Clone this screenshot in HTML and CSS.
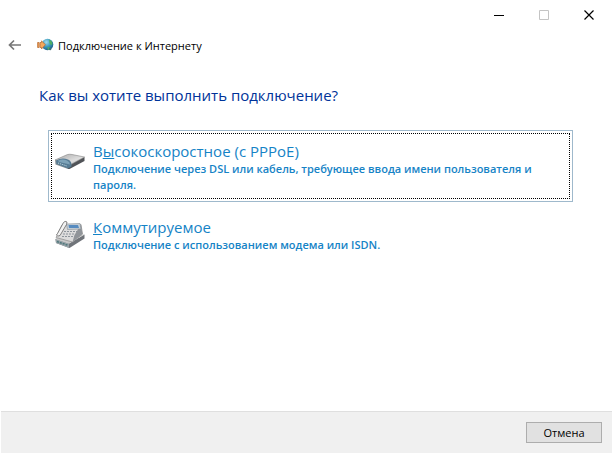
FILE: index.html
```html
<!DOCTYPE html>
<html lang="ru">
<head>
    <meta charset="utf-8">
    <title>Подключение к Интернету</title>
    <link rel="stylesheet" href="styles.css">
</head>
<body>
    <div class="window">
        <div class="window-controls">
            <button type="button" class="control" aria-label="Свернуть">
                <svg width="11" height="11" viewBox="0 0 11 11"><path d="M0 5.5h10" stroke="#000"/></svg>
            </button>
            <button type="button" class="control" aria-label="Развернуть" disabled>
                <svg width="11" height="11" viewBox="0 0 11 11"><path d="M.5 .5h9v9h-9z" fill="none" stroke="#c4c4c4"/></svg>
            </button>
            <button type="button" class="control" aria-label="Закрыть">
                <svg width="11" height="11" viewBox="0 0 11 11"><path d="M.5 .5l9 9M9.500 .5l-9 9" stroke="#000" stroke-width="1.2"/></svg>
            </button>
        </div>

        <header class="header">
            <button type="button" class="back" aria-label="Назад">
                <svg width="14" height="12" viewBox="0 0 14 12"><path d="M1.500 6H13M6 1.500L1.500 6L6 10.500" fill="none" stroke="#777" stroke-width="1.7"/></svg>
            </button>
            <svg class="app-icon" width="17" height="14" viewBox="0 0 17 14">
                <defs>
                    <radialGradient id="globe" cx=".4" cy=".3" r=".75">
                        <stop offset="0" stop-color="#a5dcec"/>
                        <stop offset=".5" stop-color="#3c9cc0"/>
                        <stop offset="1" stop-color="#17557e"/>
                    </radialGradient>
                </defs>
                <circle cx="10.5" cy="6.5" r="5.8" fill="url(#globe)"/>
                <path d="M12 1.500l2.500 1.600 1 3-1.500 1.200-1.500-2zM10.500 9l2.500 .5-.6 2-1.600 .4z" fill="#4fae62"/>
                <path d="M.6 4.500h1.500v5H.6zM3 4.500h1.500V2.800l3.900 4L4.500 11V9.500H3z" fill="#f5a95c" stroke="#b4652c" stroke-width=".7"/>
                <circle cx="13.2" cy="11" r="1.2" fill="#3c6d78"/>
            </svg>
            <span class="header-title">Подключение к Интернету</span>
        </header>

        <main class="content">
            <h1>Как вы хотите выполнить подключение?</h1>

            <div class="options">
                <button type="button" class="option selected">
                    <svg class="option-icon" width="32" height="32" viewBox="0 0 32 32">
                        <defs>
                            <linearGradient id="modem-top" x1="0" y1="0" x2="1" y2="1">
                                <stop offset="0" stop-color="#a8a8a8"/>
                                <stop offset=".6" stop-color="#dedede"/>
                                <stop offset="1" stop-color="#a0a0a0"/>
                            </linearGradient>
                        </defs>
                        <path d="M1 16l13 4.500V25L1.500 20.500z" fill="#8f9497"/>
                        <path d="M14 20.500L30.500 13v4L15.500 25H14z" fill="#505357"/>
                        <path d="M1 16L13.500 10.500Q16 10 18 10.500L30.500 13 16 21Q14 21.500 12 20.500z" fill="url(#modem-top)" stroke="#858585" stroke-width=".6"/>
                        <path d="M2 16.500Q8 13 14 15.500Q18 17 17.500 22.500L14 24.500 2.500 20z" fill="#577c94"/>
                        <path d="M4 16.500Q9 14.500 13 16.500Q16 18 16 20.500L5 18z" fill="#7ea3b8"/>
                        <path d="M4 19l9 3" stroke="#c6dfe8" stroke-dasharray="1 1"/>
                    </svg>
                    <span class="option-text">
                        <span class="option-title">В<u>ы</u>сокоскоростное (с PPPoE)</span>
                        <span class="option-description">Подключение через DSL или кабель, требующее ввода имени пользователя и пароля.</span>
                    </span>
                </button>

                <button type="button" class="option">
                    <svg class="option-icon" width="32" height="32" viewBox="0 0 32 32">
                        <!-- base -->
                        <path d="M1.500 19L15 23.500 30.500 14.500V18.500L15.500 28 2 23z" fill="#70747a"/>
                        <path d="M1.500 19l13.500 4.500V28L2 23z" fill="#98a3a8"/>
                        <path d="M3 21.500l11 3.800" stroke="#4f797d" stroke-width="1.600" stroke-dasharray="2 1"/>
                        <path d="M1.500 19L7 14l23.500 .5L15 23.500z" fill="#c9c9c9"/>
                        <!-- phone body -->
                        <path d="M2 17.500L8 5 27 4.500 28.500 14 18.500 22z" fill="#dcdcdc" stroke="#8c8c8c" stroke-width=".7"/>
                        <path d="M27 4.500L28.500 14 18.500 22 20.500 15z" fill="#909499"/>
                        <path d="M12.500 4L26 3.500 27 9 13.500 9.500z" fill="#c6d0d8" stroke="#858b91" stroke-width=".6"/>
                        <path d="M14.500 5h9.500l1 3H15z" fill="#568bc0"/>
                        <path d="M10 11.500h13M9 14h12M8 16.500h11" stroke="#8d949b" stroke-width="1.200" stroke-dasharray="2 1"/>
                        <!-- handset -->
                        <path d="M3.500 13.500L9.500 2.500Q11 .5 13 2L12.500 4.500 6 15.500Q3.500 17 2.500 15z" fill="#f2f2f2" stroke="#666" stroke-width=".8"/>
                    </svg>
                    <span class="option-text">
                        <span class="option-title"><u>К</u>оммутируемое</span>
                        <span class="option-description">Подключение с использованием модема или ISDN.</span>
                    </span>
                </button>
            </div>
        </main>

        <footer class="footer">
            <button type="button" class="cancel">Отмена</button>
        </footer>
    </div>
</body>
</html>
```
FILE: styles.css
```css
* {
    box-sizing: border-box;
}

body {
    margin: 0;
    font-family: "Open Sans", "Noto Sans", sans-serif;
    font-size: 11px;
    color: #000;
    background-color: #fff;
}

button {
    margin: 0;
    padding: 0;
    border: none;
    background: none;
    font: inherit;
    color: inherit;
}

svg {
    display: block;
    flex: none;
}

.window {
    display: flex;
    flex-direction: column;
    min-height: 100vh;
    padding: 0 2px 1px 1px;
}

.window-controls {
    display: flex;
    justify-content: flex-end;
}

.control {
    display: flex;
    align-items: center;
    justify-content: center;
    width: 45px;
    height: 30px;
}

.header {
    display: flex;
    align-items: center;
    height: 30px;
    padding-left: 7px;
}

.back {
    margin-right: 15px;
}

.app-icon {
    margin-right: 4px;
}

.content {
    flex: 1;
    padding: 24px 39px 24px 38px;
}

h1 {
    margin: 0 0 24px;
    font-size: 15px;
    font-weight: 400;
    line-height: 22px;
    color: #003399;
}

.options {
    display: grid;
    gap: 4px;
    margin-left: 9px;
}

.option {
    display: flex;
    align-items: flex-start;
    padding: 10px 40px 8px 5px;
    border: 1px solid transparent;
    text-align: left;
    color: #1583c6;
}

.option.selected {
    border-color: #9fb9cc;
    outline: 1px dotted #000;
    outline-offset: -4px;
}

.option-icon {
    margin: 3px 7px 0 0;
}

.option-title,
.option-description {
    display: block;
}

.option-title {
    font-size: 15px;
    line-height: 20px;
}

.option-description {
    font-size: 11px;
    font-weight: 600;
    line-height: 16px;
}

.footer {
    display: flex;
    justify-content: flex-end;
    padding: 10px;
    border-top: 1px solid #dfdfdf;
    background-color: #f0f0f0;
}

.cancel {
    width: 76px;
    height: 21px;
    border: 1px solid #adadad;
    background-color: #e1e1e1;
    line-height: 18px;
}
```
